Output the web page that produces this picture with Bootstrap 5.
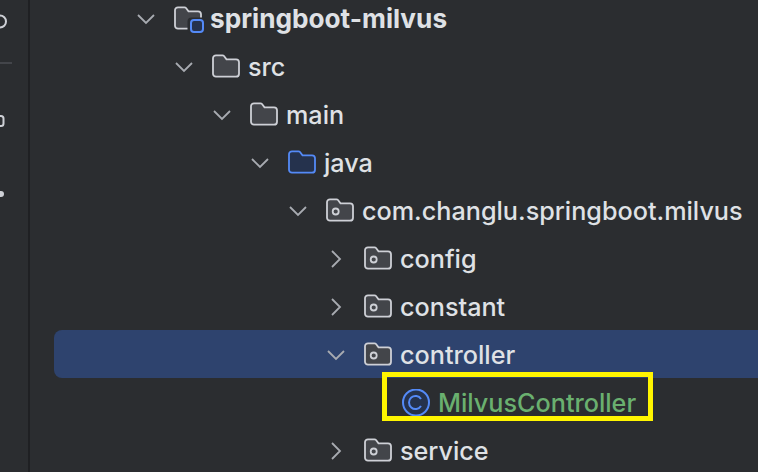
<!DOCTYPE html>
<html lang="en">
<head>
  <meta charset="UTF-8" />
  <meta name="viewport" content="width=device-width, initial-scale=1.0"/>
  <title>Project tree</title>
  <link rel="stylesheet" href="https://cdn.jsdelivr.net/npm/bootstrap@5.3.0/dist/css/bootstrap.min.css">
  <style>
    html, body {
      height: 100%;
    }
    body {
      font-family: Inter, "Liberation Sans", sans-serif;
      background-color: #2b2d30;
      color: #dfe1e5;
      overflow: hidden;
    }
    .side-rail {
      width: 30px;
      height: 472px;
      border-right: 2px solid #1f2023;
    }
    .tree-pane {
      margin-top: -5px;
      margin-left: 24px;
    }
    .tree-row {
      height: 48px;
      font-size: 25.2px;
      font-weight: 500;
      line-height: 48px;
      white-space: nowrap;
    }
    .tree-row.selected {
      background-color: #2e436e;
      border-radius: 8px 0 0 8px;
      margin-top: -1px;
      margin-bottom: 1px;
      padding-top: 2px;
    }
    .lv0 { padding-left: 78px; }
    .lv1 { padding-left: 116px; }
    .lv2 { padding-left: 154px; }
    .lv3 { padding-left: 192px; }
    .lv4 { padding-left: 230px; }
    .lv5 { padding-left: 268px; }
    .lv6 { padding-left: 348px; }
    .chev {
      width: 28px;
      height: 28px;
      margin-right: 14px;
      flex: none;
    }
    .node-icon {
      width: 28px;
      height: 28px;
      margin-right: 8px;
      flex: none;
    }
    .root-name {
      font-size: 26.2px;
      font-weight: 700;
    }
    .class-name {
      color: #6ab06f;
    }
    .mark-box {
      position: absolute;
      left: 328px;
      top: -7px;
      width: 271px;
      height: 49px;
      border: 5px solid #fff500;
      pointer-events: none;
    }
  </style>
</head>
<body>

  <svg width="0" height="0" class="position-absolute">
    <defs>
      <symbol id="ic-down" viewBox="0 0 28 28">
        <path d="M6 10l8 8 8-8" fill="none" stroke="#a8abb1" stroke-width="1.800"/>
      </symbol>
      <symbol id="ic-right" viewBox="0 0 28 28">
        <path d="M10 6l8 8-8 8" fill="none" stroke="#a8abb1" stroke-width="1.800"/>
      </symbol>
      <symbol id="ic-folder" viewBox="0 0 28 28">
        <path d="M1 5.300a3 3 0 0 1 3-3h6.500a2 2 0 0 1 1.500.7l2.500 3.300H24a3 3 0 0 1 3 3V20.700a3 3 0 0 1-3 3H4a3 3 0 0 1-3-3z" fill="#43454a" stroke="#ced0d6" stroke-width="1.800"/>
      </symbol>
      <symbol id="ic-source" viewBox="0 0 28 28">
        <path d="M1 5.300a3 3 0 0 1 3-3h6.500a2 2 0 0 1 1.500.7l2.500 3.300H24a3 3 0 0 1 3 3V20.700a3 3 0 0 1-3 3H4a3 3 0 0 1-3-3z" fill="#25324d" stroke="#548af7" stroke-width="1.800"/>
      </symbol>
      <symbol id="ic-package" viewBox="0 0 28 28">
        <path d="M1 5.300a3 3 0 0 1 3-3h6.500a2 2 0 0 1 1.500.7l2.500 3.300H24a3 3 0 0 1 3 3V20.700a3 3 0 0 1-3 3H4a3 3 0 0 1-3-3z" fill="#43454a" stroke="#ced0d6" stroke-width="1.800"/>
        <circle cx="9.700" cy="14.500" r="3" fill="none" stroke="#ced0d6" stroke-width="1.800"/>
      </symbol>
    </defs>
  </svg>

  <div class="d-flex">
    <!-- Cut off tool window strip -->
    <div class="side-rail flex-shrink-0">
      <svg width="28" height="472" class="d-block">
        <path d="M0 15.500a6 6 0 0 1 0 12" fill="none" stroke="#ced0d6" stroke-width="2"/>
        <rect x="0" y="62" width="12" height="2" fill="#43454a"/>
        <path d="M0 116h1a2.500 2.500 0 0 1 2.500 2.500v5a2.500 2.500 0 0 1-2.500 2.500H0" fill="none" stroke="#ced0d6" stroke-width="2"/>
        <circle cx="1" cy="194" r="3" fill="#ced0d6"/>
      </svg>
    </div>

    <!-- Project tree -->
    <div class="tree-pane flex-grow-1">
      <div class="tree-row d-flex align-items-center lv0">
        <svg class="chev"><use href="#ic-down"/></svg>
        <svg class="node-icon" viewBox="0 0 28 28" overflow="visible">
          <path d="M1 5.300a3 3 0 0 1 3-3h6.500a2 2 0 0 1 1.500.7l2.500 3.300H24a3 3 0 0 1 3 3V20.700a3 3 0 0 1-3 3H4a3 3 0 0 1-3-3z" fill="#43454a" stroke="#ced0d6" stroke-width="1.800"/>
          <rect x="13.500" y="12.500" width="18" height="16" rx="4" fill="#2b2d30"/>
          <rect x="17" y="15" width="12" height="12" rx="3" fill="#25324d" stroke="#548af7" stroke-width="2"/>
        </svg>
        <span class="root-name">springboot-milvus</span>
      </div>
      <div class="tree-row d-flex align-items-center lv1">
        <svg class="chev"><use href="#ic-down"/></svg>
        <svg class="node-icon"><use href="#ic-folder"/></svg>
        <span>src</span>
      </div>
      <div class="tree-row d-flex align-items-center lv2">
        <svg class="chev"><use href="#ic-down"/></svg>
        <svg class="node-icon"><use href="#ic-folder"/></svg>
        <span>main</span>
      </div>
      <div class="tree-row d-flex align-items-center lv3">
        <svg class="chev"><use href="#ic-down"/></svg>
        <svg class="node-icon"><use href="#ic-source"/></svg>
        <span>java</span>
      </div>
      <div class="tree-row d-flex align-items-center lv4">
        <svg class="chev"><use href="#ic-down"/></svg>
        <svg class="node-icon"><use href="#ic-package"/></svg>
        <span>com.changlu.springboot.milvus</span>
      </div>
      <div class="tree-row d-flex align-items-center lv5">
        <svg class="chev"><use href="#ic-right"/></svg>
        <svg class="node-icon"><use href="#ic-package"/></svg>
        <span>config</span>
      </div>
      <div class="tree-row d-flex align-items-center lv5">
        <svg class="chev"><use href="#ic-right"/></svg>
        <svg class="node-icon"><use href="#ic-package"/></svg>
        <span>constant</span>
      </div>
      <div class="tree-row selected d-flex align-items-center lv5">
        <svg class="chev"><use href="#ic-down"/></svg>
        <svg class="node-icon"><use href="#ic-package"/></svg>
        <span>controller</span>
      </div>
      <div class="tree-row position-relative d-flex align-items-center lv6">
        <svg class="node-icon" viewBox="0 0 28 28">
          <circle cx="14" cy="13.500" r="13" fill="#25324d" stroke="#548af7" stroke-width="2"/>
          <path d="M19 10a6.500 6.500 0 1 0 0 7" fill="none" stroke="#548af7" stroke-width="2"/>
        </svg>
        <span class="class-name">MilvusController</span>
        <div class="mark-box"></div>
      </div>
      <div class="tree-row d-flex align-items-center lv5">
        <svg class="chev"><use href="#ic-right"/></svg>
        <svg class="node-icon"><use href="#ic-package"/></svg>
        <span>service</span>
      </div>
    </div>
  </div>

  <script src="https://cdn.jsdelivr.net/npm/bootstrap@5.3.0/dist/js/bootstrap.bundle.min.js"></script>
</body>
</html>
